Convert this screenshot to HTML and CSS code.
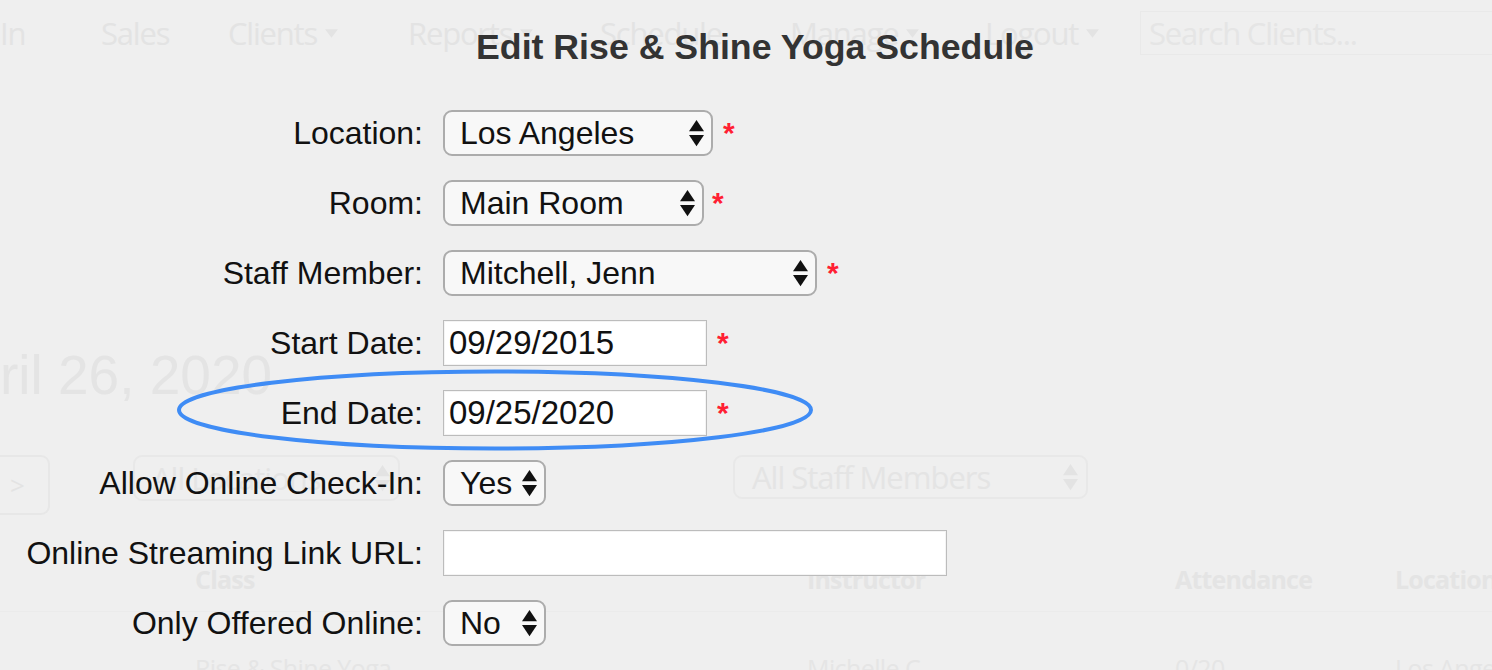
FILE: index.html
```html
<!DOCTYPE html>
<html lang="en">
<head>
<meta charset="utf-8">
<title>Edit Rise &amp; Shine Yoga Schedule</title>
<link rel="stylesheet" href="styles.css">
</head>
<body>
<div class="backdrop">
  <nav class="nav">
    <span class="nav-item w-in">In</span>
    <span class="nav-item w-sales">Sales</span>
    <span class="nav-item w-clients">Clients <svg class="caret" viewBox="0 0 12 8"><polygon points="0,0 12,0 6,8"/></svg></span>
    <span class="nav-item w-reports">Reports <svg class="caret" viewBox="0 0 12 8"><polygon points="0,0 12,0 6,8"/></svg></span>
    <span class="nav-item w-schedule">Schedule</span>
    <span class="nav-item w-manage">Manage <svg class="caret" viewBox="0 0 12 8"><polygon points="0,0 12,0 6,8"/></svg></span>
    <span class="nav-item w-logout">Logout <svg class="caret" viewBox="0 0 12 8"><polygon points="0,0 12,0 6,8"/></svg></span>
    <div class="search">Search Clients...</div>
  </nav>
  <div class="date-heading">ril 26, 2020</div>
  <div class="filters">
    <div class="next-btn">&gt;</div>
    <div class="bg-select w-locations">All Locations <svg class="bg-arrows" viewBox="0 0 16 28"><polygon points="8,0 16,12 0,12"/><polygon points="0,16 16,16 8,28"/></svg></div>
    <div class="bg-select w-staff">All Staff Members <svg class="bg-arrows" viewBox="0 0 16 28"><polygon points="8,0 16,12 0,12"/><polygon points="0,16 16,16 8,28"/></svg></div>
  </div>
  <div class="table">
    <div class="table-head">
      <span>Class</span><span>Instructor</span><span>Attendance</span><span>Location</span>
    </div>
    <div class="table-row">
      <span>Rise &amp; Shine Yoga</span><span>Michelle C.</span><span>0/20</span><span>Los Angeles</span>
    </div>
  </div>
</div>

<div class="modal">
  <h1 class="modal-title">Edit Rise &amp; Shine Yoga Schedule</h1>
  <div class="form">
    <div class="label">Location:</div>
    <div class="field">
      <div class="select w-loc"><span>Los Angeles</span><svg class="arrows" viewBox="0 0 16 28"><polygon points="8,0 16,12 0,12"/><polygon points="0,16 16,16 8,28"/></svg></div>
      <span class="req">*</span>
    </div>

    <div class="label">Room:</div>
    <div class="field">
      <div class="select w-room"><span>Main Room</span><svg class="arrows" viewBox="0 0 16 28"><polygon points="8,0 16,12 0,12"/><polygon points="0,16 16,16 8,28"/></svg></div>
      <span class="req req-tight">*</span>
    </div>

    <div class="label">Staff Member:</div>
    <div class="field">
      <div class="select w-staffm"><span>Mitchell, Jenn</span><svg class="arrows" viewBox="0 0 16 28"><polygon points="8,0 16,12 0,12"/><polygon points="0,16 16,16 8,28"/></svg></div>
      <span class="req">*</span>
    </div>

    <div class="label">Start Date:</div>
    <div class="field">
      <div class="input w-date">09/29/2015</div>
      <span class="req">*</span>
    </div>

    <div class="label">End Date:</div>
    <div class="field">
      <div class="input w-date">09/25/2020</div>
      <span class="req">*</span>
    </div>

    <div class="label">Allow Online Check-In:</div>
    <div class="field">
      <div class="select w-yesno"><span>Yes</span><svg class="arrows" viewBox="0 0 16 28"><polygon points="8,0 16,12 0,12"/><polygon points="0,16 16,16 8,28"/></svg></div>
    </div>

    <div class="label">Online Streaming Link URL:</div>
    <div class="field">
      <div class="input w-url"></div>
    </div>

    <div class="label">Only Offered Online:</div>
    <div class="field">
      <div class="select w-yesno"><span>No</span><svg class="arrows" viewBox="0 0 16 28"><polygon points="8,0 16,12 0,12"/><polygon points="0,16 16,16 8,28"/></svg></div>
    </div>
  </div>
  <svg class="highlight" viewBox="0 0 1492 670"><ellipse cx="495" cy="410" rx="316" ry="38.5"/></svg>
</div>
</body>
</html>
```

FILE: styles.css
```css
* { box-sizing: border-box; }
html, body { margin: 0; padding: 0; }
body {
  width: 1492px;
  height: 670px;
  overflow: hidden;
  position: relative;
  background: #efefef;
  font-family: "Liberation Sans", Arial, sans-serif;
}

/* ---------- faded page behind the dialog ---------- */
.backdrop {
  color: #e3e3e3;
  font-family: "Open Sans", sans-serif;
}
.nav {
  display: flex;
  align-items: center;
  height: 44px;
  margin-top: 11px;
  font-size: 31px;
  letter-spacing: -1.2px;
}
.nav-item {
  flex: none;
  display: flex;
  align-items: center;
  gap: 8px;
  white-space: nowrap;
}
.w-in { width: 101px; }
.w-sales { width: 127px; }
.w-clients { width: 180px; }
.w-reports { width: 192px; }
.w-schedule { width: 190px; }
.w-manage { width: 195px; }
.w-logout { width: 155px; }
.caret { width: 13px; height: 9px; fill: #e3e3e3; }
.search {
  flex: 1;
  height: 44px;
  border: 1px solid #e9e9e9;
  border-right: none;
  padding-left: 8px;
  display: flex;
  align-items: center;
  color: #e5e5e5;
}
.date-heading {
  margin-top: 293px;
  font-family: "Liberation Sans", Arial, sans-serif;
  font-size: 55px;
  line-height: 55px;
  color: #e4e4e4;
  white-space: nowrap;
}
.filters {
  display: flex;
  align-items: flex-start;
  margin-top: 52px;
  height: 60px;
}
.next-btn {
  width: 50px;
  height: 60px;
  border: 2px solid #e7e7e7;
  border-left: none;
  border-radius: 0 9px 9px 0;
  display: flex;
  align-items: center;
  padding-left: 10px;
  font-size: 26px;
  color: #e3e3e3;
}
.bg-select {
  height: 46px;
  border: 2px solid #e8e8e8;
  border-radius: 9px;
  display: flex;
  align-items: center;
  justify-content: space-between;
  padding: 0 8px 0 17px;
  font-size: 31px;
  letter-spacing: -1px;
  color: #e4e4e4;
}
.w-locations { width: 267px; margin-left: 83px; }
.w-staff { width: 355px; margin-left: 333px; height: 44px; }
.bg-arrows { width: 15px; height: 28px; fill: #e3e3e3; }
.table { margin-top: 31px; }
.table-head, .table-row {
  display: grid;
  grid-template-columns: 612px 368px 220px 1fr;
  padding-left: 195px;
  align-items: center;
  white-space: nowrap;
}
.table-head {
  height: 66px;
  font-size: 25px;
  font-weight: 700;
  letter-spacing: -0.8px;
  color: #e4e4e4;
  border-bottom: 1px solid #ebebeb;
}
.table-row {
  height: 112px;
  font-size: 25px;
  letter-spacing: -0.6px;
  color: #e5e5e5;
}

/* ---------- dialog ---------- */
.modal {
  position: absolute;
  top: 0;
  left: 0;
  width: 1492px;
  height: 670px;
}
.modal-title {
  margin: 27px 0 0;
  padding-left: 18px;
  text-align: center;
  font-size: 35.7px;
  line-height: 40px;
  font-weight: 700;
  color: #333;
}
.form {
  margin-top: 31px;
  display: grid;
  grid-template-columns: 423px 1fr;
  column-gap: 20px;
  grid-auto-rows: 70px;
  align-items: center;
}
.label {
  text-align: right;
  font-size: 32px;
  color: #111;
  white-space: nowrap;
}
.field {
  display: flex;
  align-items: center;
}
.select {
  height: 46px;
  display: flex;
  align-items: center;
  justify-content: space-between;
  padding: 0 7px 0 15px;
  border: 2px solid #acacac;
  border-radius: 9px;
  background: #f8f8f8;
  font-size: 32px;
  color: #111;
  white-space: nowrap;
}
.arrows { width: 15px; height: 28px; fill: #111; flex: none; }
.w-loc { width: 270px; }
.w-room { width: 261px; }
.w-staffm { width: 374px; }
.w-yesno { width: 103px; }
.input {
  height: 46px;
  display: flex;
  align-items: center;
  padding-left: 5px;
  border: 1px solid #bcbcbc;
  box-shadow: inset 0 0 0 1px #f4f4f4;
  background: #fff;
  font-size: 33px;
  color: #111;
}
.w-date { width: 264px; }
.w-url { width: 504px; }
.req {
  margin-left: 10px;
  font-size: 30px;
  font-weight: 700;
  line-height: 46px;
  color: #ff1f33;
}
.req-tight { margin-left: 8px; }
.highlight {
  position: absolute;
  top: 0;
  left: 0;
  width: 1492px;
  height: 670px;
  pointer-events: none;
}
.highlight ellipse {
  fill: none;
  stroke: #3f8cf5;
  stroke-width: 4;
}
```
